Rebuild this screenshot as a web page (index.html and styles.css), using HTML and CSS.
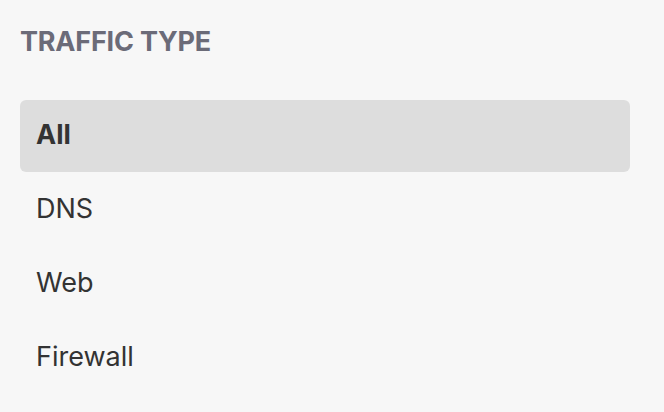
FILE: index.html
```html
<!DOCTYPE html>
<html lang="en">
<head>
  <meta charset="UTF-8">
  <title>Traffic Type</title>
  <link rel="stylesheet" href="styles.css">
</head>
<body>
  <div class="filter">
    <h2 class="filter-title">TRAFFIC TYPE</h2>
    <ul class="filter-list">
      <li class="filter-item active">All</li>
      <li class="filter-item">DNS</li>
      <li class="filter-item">Web</li>
      <li class="filter-item">Firewall</li>
    </ul>
  </div>
</body>
</html>
```

FILE: styles.css
```css
body {
  margin: 0;
  background-color: #f7f7f7;
  font-family: Inter, "Noto Sans", sans-serif;
  color: #333333;
}
.filter {
  padding: 24px 34px 0 20px;
}
.filter-title {
  margin: 0 0 40px;
  font-size: 27px;
  font-weight: 700;
  line-height: 36px;
  color: #6b6b78;
  letter-spacing: -0.2px;
}
.filter-list {
  list-style: none;
  margin: 0;
  padding: 0;
  display: flex;
  flex-direction: column;
  gap: 2px;
}
.filter-item {
  box-sizing: border-box;
  height: 72px;
  display: flex;
  align-items: center;
  padding: 0 16px 4px;
  font-size: 27px;
  border-radius: 6px;
  cursor: pointer;
}
.filter-item.active {
  background-color: #dddddd;
  font-weight: 700;
}
```
